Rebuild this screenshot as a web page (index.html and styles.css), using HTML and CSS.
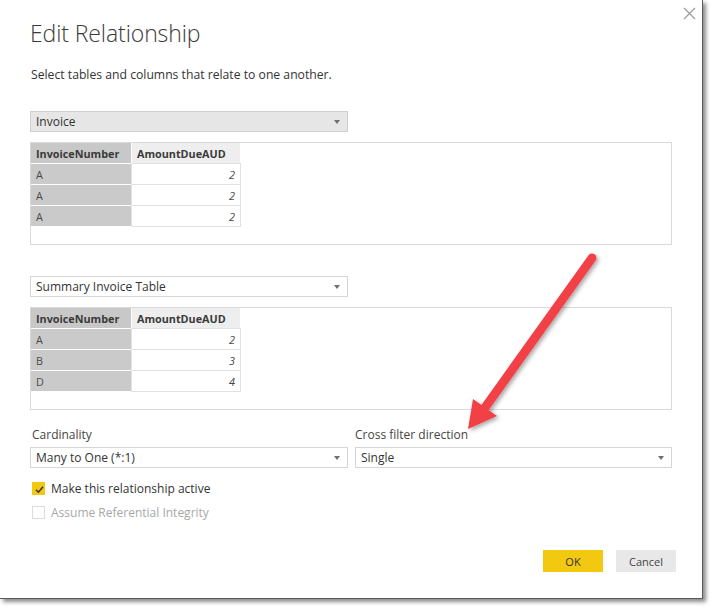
FILE: index.html
```html
<!DOCTYPE html>
<html>
<head>
<meta charset="utf-8">
<link rel="stylesheet" href="styles.css">
</head>
<body>
<div class="dialog">
  <div class="close" aria-label="Close">
    <svg width="13" height="13" viewBox="0 0 13 13"><path d="M1 1 L12 12 M12 1 L1 12" stroke="#9a9a9a" stroke-width="1.2" fill="none"/></svg>
  </div>
  <h1 class="title">Edit Relationship</h1>
  <p class="subtitle">Select tables and columns that relate to one another.</p>

  <div class="select select-grey"><span>Invoice</span><i class="caret"></i></div>
  <div class="preview">
    <div class="grid">
      <div class="hc key">InvoiceNumber</div><div class="hc val">AmountDueAUD</div>
      <div class="c key">A</div><div class="c val">2</div>
      <div class="c key">A</div><div class="c val">2</div>
      <div class="c key">A</div><div class="c val">2</div>
    </div>
  </div>

  <div class="select select-white second"><span>Summary Invoice Table</span><i class="caret"></i></div>
  <div class="preview">
    <div class="grid">
      <div class="hc key">InvoiceNumber</div><div class="hc val">AmountDueAUD</div>
      <div class="c key">A</div><div class="c val">2</div>
      <div class="c key">B</div><div class="c val">3</div>
      <div class="c key">D</div><div class="c val">4</div>
    </div>
  </div>

  <div class="options">
    <div class="field">
      <div class="label">Cardinality</div>
      <div class="select select-white"><span>Many to One (*:1)</span><i class="caret"></i></div>
    </div>
    <div class="field">
      <div class="label">Cross filter direction</div>
      <div class="select select-white"><span>Single</span><i class="caret"></i></div>
    </div>
  </div>

  <div class="check checked">
    <span class="box"><svg width="13" height="13" viewBox="0 0 13 13"><path d="M3 6.8 L5.4 9.2 L10 3.8" stroke="#333" stroke-width="1.5" fill="none"/></svg></span>
    <span>Make this relationship active</span>
  </div>
  <div class="check disabled">
    <span class="box"></span>
    <span>Assume Referential Integrity</span>
  </div>

  <div class="buttons">
    <button class="btn ok">OK</button>
    <button class="btn cancel">Cancel</button>
  </div>

  <svg class="arrow" width="716" height="611" viewBox="0 0 716 611">
    <defs>
      <filter id="sh" x="-20%" y="-20%" width="140%" height="140%">
        <feDropShadow dx="2" dy="2" stdDeviation="2" flood-color="#000" flood-opacity="0.35"/>
      </filter>
    </defs>
    <g filter="url(#sh)">
      <line x1="592" y1="258" x2="484" y2="409" stroke="#f24147" stroke-width="9" stroke-linecap="round"/>
      <polygon points="468,429 473,399 497,416" fill="#f24147"/>
    </g>
  </svg>
</div>
</body>
</html>
```

FILE: styles.css
```css
html, body {
  margin: 0;
  padding: 0;
  background: #ffffff;
}
body {
  font-family: "Open Sans", "Noto Sans", sans-serif;
  color: #333333;
  width: 716px;
  height: 611px;
  overflow: hidden;
}
.dialog {
  position: relative;
  width: 703px;
  height: 599px;
  box-sizing: border-box;
  background: #ffffff;
  border-right: 1px solid #5a5a5a;
  border-bottom: 1px solid #5a5a5a;
  box-shadow: 3px 3px 4px rgba(0,0,0,0.45);
  padding: 0 0 0 30px;
}
.close {
  position: absolute;
  top: 7px;
  left: 683px;
  width: 13px;
  height: 13px;
}
.close svg { display: block; }
.title {
  margin: 0;
  padding-top: 17px;
  font-size: 23px;
  font-weight: 300;
  line-height: 32px;
  color: #3a3a3a;
  letter-spacing: -0.1px;
}
.subtitle {
  margin: 18px 0 0 1px;
  font-size: 12.2px;
  line-height: 16px;
  color: #333;
}
.select {
  width: 318px;
  height: 21px;
  box-sizing: border-box;
  border: 1px solid #d6d6d6;
  display: flex;
  align-items: center;
  justify-content: space-between;
  padding: 0 7px 0 5px;
  font-size: 12px;
  color: #333;
}
.select-grey {
  margin-top: 28px;
  background: #e6e6e6;
  border-color: #cfcfcf;
}
.select-white { background: #fff; }
.select.second { margin-top: 31px; }
.caret {
  width: 0;
  height: 0;
  border-left: 3.5px solid transparent;
  border-right: 3.5px solid transparent;
  border-top: 4px solid #707070;
}
.preview {
  margin-top: 10px;
  width: 642px;
  height: 103px;
  box-sizing: border-box;
  border: 1px solid #d9d9d9;
  padding: 0;
}
.grid {
  display: grid;
  grid-template-columns: 100px 108px;
  grid-auto-rows: 20px;
  gap: 1px;
  font-size: 10.8px;
}
.hc, .c {
  display: flex;
  align-items: center;
  padding: 0 5px;
}
.hc { font-weight: 700; color: #3a3a3a; }
.hc.key { background: #c8c8c8; }
.hc.val { background: #eeeeee; }
.c.key { background: #cacaca; color: #4a4a4a; }
.c.val {
  background: #fff;
  justify-content: flex-end;
  font-style: italic;
  color: #444;
  box-shadow: 0 0 0 1px #e2e2e2;
}
.options {
  margin-top: 17px;
  display: flex;
  gap: 7px;
}
.field .label {
  font-size: 12px;
  line-height: 16px;
  margin: 0 0 4px 2px;
  color: #444;
}
.options .field:last-child .label { margin-left: 0; }
.options .field:last-child .select { width: 317px; }
.check {
  display: flex;
  align-items: center;
  gap: 6px;
  font-size: 12px;
  margin-left: 2px;
}
.check.checked { margin-top: 12px; color: #333; }
.check.disabled { margin-top: 7px; color: #a8a8a8; }
.box {
  width: 13px;
  height: 13px;
  box-sizing: border-box;
  border: 1px solid #dcdcdc;
  display: block;
}
.box svg { display: block; }
.checked .box { background: #f2c811; border-color: #f2c811; }
.buttons {
  margin-top: 29px;
  display: flex;
  gap: 13px;
  padding-left: 513px;
}
.btn {
  width: 60px;
  height: 22px;
  border: 0;
  font-family: inherit;
  font-size: 11px;
  color: #333;
  padding: 0;
}
.ok { background: #f2c811; }
.cancel { background: #e8e8e8; color: #444; }
.arrow {
  position: absolute;
  top: 0;
  left: 0;
  pointer-events: none;
}
```
